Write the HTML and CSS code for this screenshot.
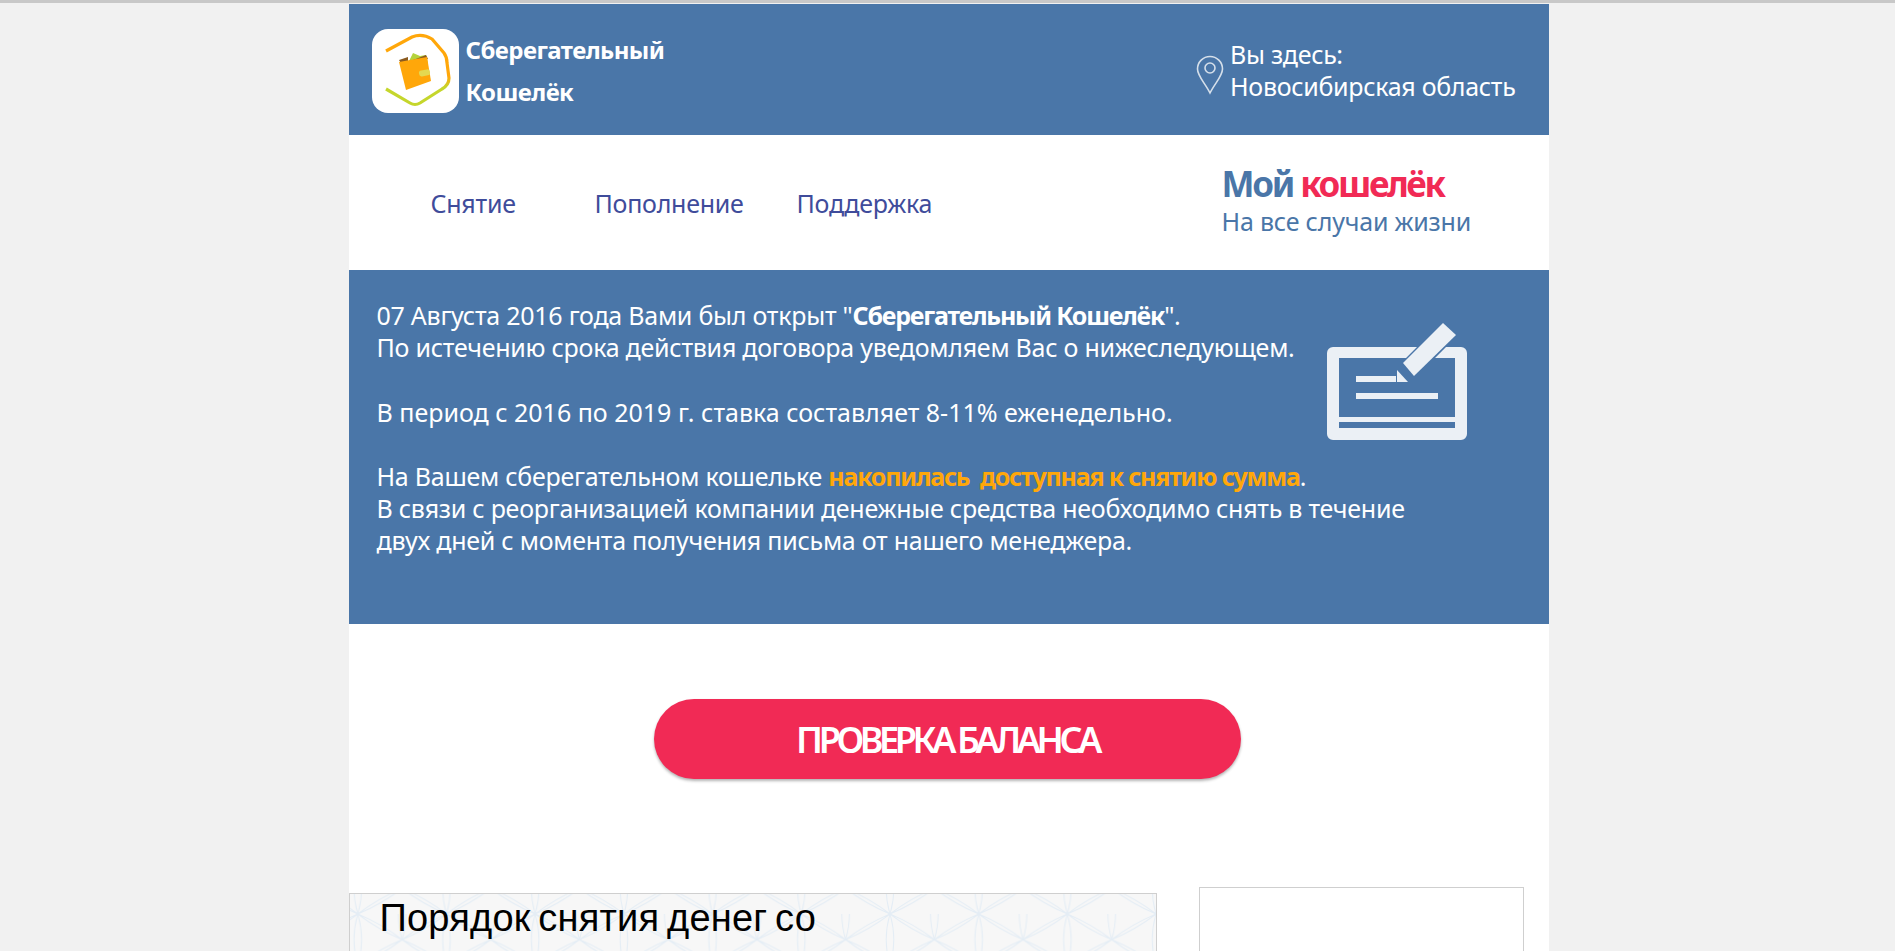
FILE: index.html
```html
<!DOCTYPE html>
<html lang="ru">
<head>
  <meta charset="UTF-8">
  <title>Сберегательный Кошелёк</title>
  <link rel="stylesheet" href="styles.css">
</head>
<body>
  <div class="page">
    <header class="top">
      <div class="brand">
        <div class="logo">
          <svg width="87" height="84" viewBox="0 0 87 84">
            <defs>
              <linearGradient id="ring" x1="0" y1="0" x2="0" y2="1">
                <stop offset="0.6" stop-color="#ffa70a"/>
                <stop offset="0.75" stop-color="#c5d62c"/>
              </linearGradient>
            </defs>
            <path d="M14 22 L40 8 Q50 4 60 10 L72 24 Q75 28 75 34 L77 49 Q77 56 70 60 L48 74 Q43 77 38 74 L14 60" fill="none" stroke="url(#ring)" stroke-width="3.200"/>
            <path d="M36 34 L41 24 L48 27 L54 26 L56 34 Z" fill="#b5d33d"/>
            <path d="M27 31 L36 28 L36 33 L54 26 L56 30 L30 36 Z" fill="#8a5a20"/>
            <path d="M27 33 L55 28 L59 52 L34 61 Z" fill="#ffa70a"/>
            <rect x="47" y="41" width="11" height="6" rx="2.500" transform="rotate(-10 52 44)" fill="#e4d850"/>
          </svg>
        </div>
        <div class="brand-name">Сберегательный<br>Кошелёк</div>
      </div>
      <div class="place">
        <svg class="pin" width="28" height="40" viewBox="0 0 28 40">
          <path d="M14 38 C9 28 1.500 21 1.500 14 A12.500 12.500 0 0 1 26.500 14 C26.500 21 19 28 14 38 Z" fill="none" stroke="#d5dfea" stroke-width="1.600"/>
          <circle cx="14" cy="13" r="5" fill="none" stroke="#d5dfea" stroke-width="1.600"/>
        </svg>
        <div>Вы здесь:<br>Новосибирская область</div>
      </div>
    </header>

    <nav class="menu">
      <div class="links">
        <a class="link-first">Снятие</a>
        <a class="link-second">Пополнение</a>
        <a>Поддержка</a>
      </div>
      <div class="slogan">
        <div class="slogan-title">Мой <span class="red">кошелёк</span></div>
        <div class="slogan-sub">На все случаи жизни</div>
      </div>
    </nav>

    <section class="notice">
      <p>07 Августа 2016 года Вами был открыт "<b>Сберегательный Кошелёк</b>".<br>По истечению срока действия договора уведомляем Вас о нижеследующем.</p>
      <p class="rate">В период с 2016 по 2019 г. ставка составляет 8-11% еженедельно.</p>
      <p>На Вашем сберегательном кошельке <b class="orange">накопилась&nbsp; доступная к снятию сумма</b>.<br>В связи с реорганизацией компании денежные средства необходимо снять в течение<br>двух дней с момента получения письма от нашего менеджера.</p>
      <svg class="check" width="140" height="118" viewBox="0 0 140 118">
        <path fill-rule="evenodd" fill="#ebf0f5" d="M6 24 H90 L79 35 H12 V94 H128 V35 H108 L119 24 H134 A6 6 0 0 1 140 30 V111 A6 6 0 0 1 134 117 H6 A6 6 0 0 1 0 111 V30 A6 6 0 0 1 6 24 Z M12 99 V105 H128 V99 Z"/>
        <path fill="#ebf0f5" d="M76 40 L116 0 L129 12 L87 53 Z"/>
        <path fill="#ebf0f5" d="M70 47 L81 59 H70 Z"/>
        <rect x="29" y="53" width="40" height="6" fill="#ebf0f5"/>
        <rect x="29" y="70" width="82" height="6" fill="#ebf0f5"/>
      </svg>
    </section>

    <div class="action">
      <a class="balance">ПРОВЕРКА БАЛАНСА</a>
    </div>

    <div class="lower">
      <div class="steps">
        <svg class="pattern" width="100%" height="100%">
          <defs>
            <pattern id="flower" width="88.7" height="51.2" patternUnits="userSpaceOnUse" x="7.8" y="20">
              <g fill="none" stroke="#e4edf5" stroke-width="1">
                <path d="M0 0A90 90 0 0 0 0 51.2A90 90 0 0 0 0 0Z"/>
                <path d="M88.7 0A90 90 0 0 0 88.7 51.2A90 90 0 0 0 88.7 0Z"/>
                <path d="M44.35 -25.6A90 90 0 0 0 44.35 25.6A90 90 0 0 0 44.35 -25.6Z"/>
                <path d="M0 0A200 200 0 0 0 44.35 25.6A200 200 0 0 0 0 0Z"/>
                <path d="M44.35 25.6A200 200 0 0 0 88.7 51.2A200 200 0 0 0 44.35 25.6Z"/>
                <path d="M0 51.2A200 200 0 0 0 44.35 25.6A200 200 0 0 0 0 51.2Z"/>
                <path d="M44.35 25.6A200 200 0 0 0 88.7 0A200 200 0 0 0 44.35 25.6Z"/>
              </g>
            </pattern>
          </defs>
          <rect width="100%" height="100%" fill="url(#flower)"/>
        </svg>
        <h2>Порядок снятия денег со</h2>
      </div>
      <div class="side"></div>
    </div>
  </div>
</body>
</html>
```

FILE: styles.css
```css
html, body { height: 951px; overflow: hidden; }
body { margin: 0; background: #f1f1f1; border-top: 3px solid #c8c8c8; padding: 1px 0 0 2px; box-sizing: border-box; font-family: "Noto Sans", sans-serif; }
.page { width: 1200px; margin: 0 auto; background: #fff; height: 1400px; }

.top { height: 131px; background: #4a76a8; color: #fff; display: flex; justify-content: space-between; box-sizing: border-box; padding: 25px 33px 0 23px; }
.brand { display: flex; gap: 7px; }
.logo { width: 87px; height: 84px; background: #fff; border-radius: 16px; }
.brand-name { font-size: 24px; font-weight: 700; line-height: 42px; letter-spacing: -0.55px; }
.place { display: flex; gap: 6px; font-size: 25px; line-height: 32px; letter-spacing: -0.3px; margin-top: 9px; }
.pin { margin-top: 17px; }

.menu { height: 135px; display: flex; justify-content: space-between; box-sizing: border-box; padding: 0 0 0 82px; }
.links { display: flex; align-items: center; font-size: 25px; color: #3f4c9b; letter-spacing: -0.25px; padding-top: 1px; }
.link-first { width: 164px; }
.link-second { width: 202px; }
.slogan { width: 327px; color: #4a76a8; padding-top: 28px; }
.slogan-title { font-size: 35px; font-weight: 700; line-height: 41px; letter-spacing: -2.2px; }
.red { letter-spacing: -2.4px; color: #f12a55; }
.slogan-sub { font-size: 25px; line-height: 34px; letter-spacing: -0.2px; }

.notice { height: 354px; position: relative; box-sizing: border-box; background: #4a76a8; color: #fff; padding: 29px 0 0 28px; font-size: 25px; line-height: 32.2px; letter-spacing: -0.25px; }
.notice p { margin: 0 0 32.2px; }
.notice b { letter-spacing: -1.2px; }
.notice .rate { letter-spacing: 0; }
.orange { color: #ffa70a; }
.check { position: absolute; left: 978px; top: 53px; }

.action { height: 269px; display: flex; padding: 75px 0 0 305px; box-sizing: border-box; }
.balance { width: 587px; height: 80px; border-radius: 40px; background: #f12a55; color: #fff; box-shadow: 0 2px 3px rgba(0, 0, 0, 0.3); font-size: 36px; font-weight: 600; letter-spacing: -4.4px; display: flex; align-items: center; justify-content: center; }

.lower { display: flex; align-items: flex-start; gap: 42px; }
.steps { width: 808px; height: 400px; position: relative; box-sizing: border-box; background: #f7f7f7; border: 1px solid #cfcfcf; border-bottom: none; }
.pattern { position: absolute; left: 0; top: 0; }
.steps h2 { position: relative; margin: 0; padding-left: 30px; font-family: "Liberation Sans", Arial, sans-serif; font-size: 38px; font-weight: 400; line-height: 48px; letter-spacing: 0.2px; word-spacing: -3px; color: #000; }
.side { width: 325px; height: 400px; margin-top: -6px; box-sizing: border-box; background: #fff; border: 1px solid #cfcfcf; }
```
